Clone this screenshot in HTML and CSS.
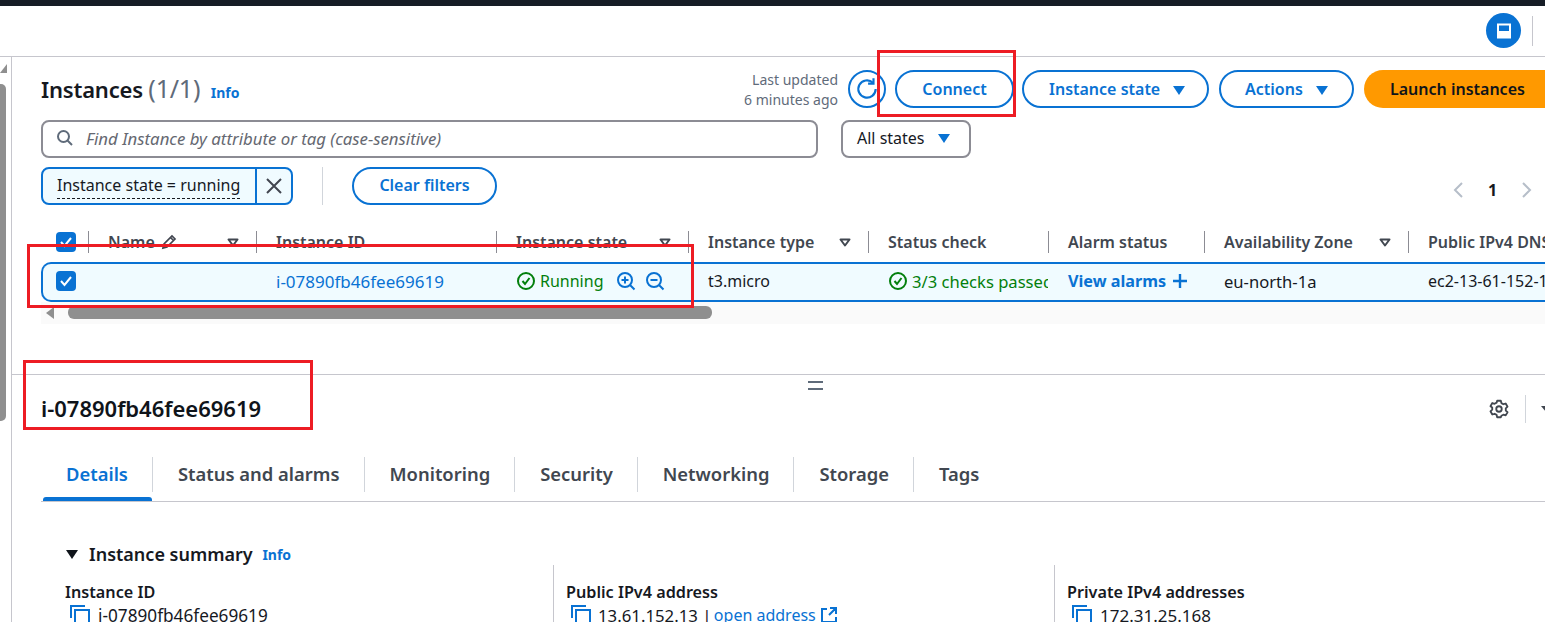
FILE: index.html
```html
<!DOCTYPE html>
<html lang="en">
<head>
<meta charset="utf-8">
<title>Instances</title>
<link rel="stylesheet" href="styles.css">
</head>
<body>
<div class="page">
  <div class="blackbar"></div>
  <header class="topbar">
    <span class="round-icon">
      <svg width="20" height="20" viewBox="0 0 20 20"><rect x="4" y="3.500" width="12" height="13" fill="none" stroke="#fff" stroke-width="2"/><rect x="4" y="10" width="12" height="6" fill="#fff"/></svg>
    </span>
    <span class="top-sep"></span>
  </header>
  <div class="workspace">
    <aside class="gutter">
      <span class="scroll-up"></span>
      <span class="scroll-thumb"></span>
    </aside>
    <main class="main">
      <section class="list-panel">
        <div class="head-row">
          <h1 class="title">Instances <span class="count">(1/1)</span> <a class="info">Info</a></h1>
          <div class="actions">
            <div class="updated">Last updated<br>6 minutes ago</div>
            <button class="refresh">
              <svg width="26" height="26" viewBox="0 0 24 24" fill="none" stroke="#0972d3" stroke-width="2"><path d="M17.500 6.200A8 8 0 1 0 20 12"/><path d="M18 2v5h-5"/></svg>
            </button>
            <button class="btn btn-connect">Connect</button>
            <button class="btn btn-state">Instance state <i class="caret"></i></button>
            <button class="btn btn-actions">Actions <i class="caret"></i></button>
            <button class="btn-primary">Launch instances</button>
          </div>
        </div>
        <div class="search-row">
          <div class="search">
            <svg width="18" height="18" viewBox="0 0 18 18" fill="none" stroke="#5f6b7a" stroke-width="2"><circle cx="7.500" cy="7.500" r="5.500"/><path d="M11.500 11.500 16 16"/></svg>
            <span>Find Instance by attribute or tag (case-sensitive)</span>
          </div>
          <div class="states">All states <i class="caret"></i></div>
        </div>
        <div class="filter-row">
          <div class="token">
            <span class="token-text"><span class="dashed">Instance state = running</span></span>
            <span class="token-x">
              <svg width="16" height="16" viewBox="0 0 16 16" fill="none" stroke="#424650" stroke-width="2"><path d="M1 1l14 14M15 1 1 15"/></svg>
            </span>
          </div>
          <span class="filter-sep"></span>
          <button class="btn btn-clear">Clear filters</button>
          <div class="pager">
            <svg width="12" height="18" viewBox="0 0 12 18" fill="none" stroke="#b6bec9" stroke-width="2"><path d="M10 2 3 9l7 7"/></svg>
            <b>1</b>
            <svg width="12" height="18" viewBox="0 0 12 18" fill="none" stroke="#b6bec9" stroke-width="2"><path d="m2 2 7 7-7 7"/></svg>
          </div>
        </div>
        <div class="table">
          <div class="tr thead">
            <div class="th first"><span class="check"><svg width="20" height="20" viewBox="0 0 20 20" fill="none" stroke="#fff" stroke-width="2"><path d="m5 10 3.500 4L15 6"/></svg></span></div>
            <div class="th"><span>Name</span><svg class="pencil" width="18" height="18" viewBox="0 0 18 18" fill="none" stroke="#424650" stroke-width="1.700"><path d="M3 15l1-4 8-8 3 3-8 8zM10.500 4.500l3 3"/></svg><svg class="sort" width="12" height="9" viewBox="0 0 12 9" fill="none" stroke="#414750" stroke-width="2" stroke-linejoin="round"><path d="M1.500 1.500h9L6 7.500z"/></svg></div>
            <div class="th"><span>Instance ID</span></div>
            <div class="th"><span>Instance state</span><svg class="sort" width="12" height="9" viewBox="0 0 12 9" fill="none" stroke="#414750" stroke-width="2" stroke-linejoin="round"><path d="M1.500 1.500h9L6 7.500z"/></svg></div>
            <div class="th"><span>Instance type</span><svg class="sort" width="12" height="9" viewBox="0 0 12 9" fill="none" stroke="#414750" stroke-width="2" stroke-linejoin="round"><path d="M1.500 1.500h9L6 7.500z"/></svg></div>
            <div class="th"><span>Status check</span></div>
            <div class="th"><span>Alarm status</span></div>
            <div class="th"><span>Availability Zone</span><svg class="sort" width="12" height="9" viewBox="0 0 12 9" fill="none" stroke="#414750" stroke-width="2" stroke-linejoin="round"><path d="M1.500 1.500h9L6 7.500z"/></svg></div>
            <div class="th"><span>Public IPv4 DNS</span></div>
          </div>
          <div class="tr tbody">
            <div class="td first"><span class="check"><svg width="20" height="20" viewBox="0 0 20 20" fill="none" stroke="#fff" stroke-width="2"><path d="m5 10 3.500 4L15 6"/></svg></span></div>
            <div class="td"></div>
            <div class="td"><a class="link idtext">i-07890fb46fee69619</a></div>
            <div class="td green">
              <svg class="ok" width="20" height="20" viewBox="0 0 20 20" fill="none" stroke="#037f0c" stroke-width="2"><circle cx="10" cy="10" r="8"/><path d="m6.500 10 2.500 3 4.500-6"/></svg>
              <span>Running</span>
              <svg class="zoomi" width="20" height="20" viewBox="0 0 20 20" fill="none" stroke="#0972d3" stroke-width="2"><circle cx="9" cy="9" r="7"/><path d="m14 14 4.500 4.500M5.500 9h7M9 5.500v7"/></svg>
              <svg class="zoomo" width="20" height="20" viewBox="0 0 20 20" fill="none" stroke="#0972d3" stroke-width="2"><circle cx="9" cy="9" r="7"/><path d="m14 14 4.500 4.500M5.500 9h7"/></svg>
            </div>
            <div class="td">t3.micro</div>
            <div class="td green checks">
              <svg class="ok" width="20" height="20" viewBox="0 0 20 20" fill="none" stroke="#037f0c" stroke-width="2"><circle cx="10" cy="10" r="8"/><path d="m6.500 10 2.500 3 4.500-6"/></svg>
              <span>3/3 checks passed</span>
            </div>
            <div class="td"><a class="alarm">View alarms</a><svg class="plus" width="16" height="16" viewBox="0 0 16 16" stroke="#0972d3" stroke-width="2.400"><path d="M8 1v14M1 8h14"/></svg></div>
            <div class="td az">eu-north-1a</div>
            <div class="td">ec2-13-61-152-13.eu-north-1.compute.amazonaws.com</div>
          </div>
        </div>
        <div class="hscroll">
          <span class="hscroll-arrow"></span>
          <span class="hscroll-thumb"></span>
        </div>
      </section>
      <section class="detail-panel">
        <div class="handle"></div>
        <div class="detail-head">
          <h2 class="detail-title">i-07890fb46fee69619</h2>
          <div class="detail-tools">
            <svg width="22" height="22" viewBox="0 0 24 24" fill="none" stroke="#414750" stroke-width="2" stroke-linejoin="round"><circle cx="12" cy="12" r="3"/><path d="M10 3h4l.6 2.600 2.200 1.200 2.500-.8 2 3.500-1.900 1.800v2.400l1.900 1.800-2 3.500-2.500-.8-2.200 1.200L14 21h-4l-.6-2.600-2.200-1.200-2.500.8-2-3.500 1.900-1.800v-2.400L2.700 9l2-3.500 2.500.8 2.200-1.200z"/></svg>
            <span class="tool-sep"></span>
            <i class="tool-caret"></i>
          </div>
        </div>
        <nav class="tabs">
          <a class="tab active">Details</a>
          <a class="tab">Status and alarms</a>
          <a class="tab">Monitoring</a>
          <a class="tab">Security</a>
          <a class="tab">Networking</a>
          <a class="tab">Storage</a>
          <a class="tab">Tags</a>
        </nav>
        <h3 class="summary"><i class="down"></i>Instance summary <a class="info small">Info</a></h3>
        <div class="kv">
          <div class="kv-col">
            <div class="k">Instance ID</div>
            <div class="v"><svg class="copy" width="20" height="20" viewBox="0 0 20 20" fill="none" stroke="#0972d3" stroke-width="2"><path d="M1 13V1h14M5 19V5h14v14"/></svg><span class="long">i-07890fb46fee69619</span></div>
          </div>
          <div class="kv-col">
            <div class="k">Public IPv4 address</div>
            <div class="v v-public"><svg class="copy" width="20" height="20" viewBox="0 0 20 20" fill="none" stroke="#0972d3" stroke-width="2"><path d="M1 13V1h14M5 19V5h14v14"/></svg>13.61.152.13 | <a class="link open">open address</a><svg class="ext" width="16" height="16" viewBox="0 0 16 16" fill="none" stroke="#0972d3" stroke-width="2"><path d="M6 2H1v13h14v-5M9 1h6v6M15 1 8 8"/></svg></div>
          </div>
          <div class="kv-col">
            <div class="k">Private IPv4 addresses</div>
            <div class="v"><svg class="copy" width="20" height="20" viewBox="0 0 20 20" fill="none" stroke="#0972d3" stroke-width="2"><path d="M1 13V1h14M5 19V5h14v14"/></svg>172.31.25.168</div>
          </div>
        </div>
      </section>
    </main>
  </div>
  <span class="mark mark-connect"></span>
  <span class="mark mark-row"></span>
  <span class="mark mark-id"></span>
</div>
</body>
</html>
```
FILE: styles.css
```css
* { box-sizing: border-box; }
html, body { margin: 0; padding: 0; height: 100%; overflow: hidden; background: #fff; }
body { font-family: "Noto Sans", "Open Sans", sans-serif; font-size: 16px; color: #16191f; }
h1, h2, h3 { margin: 0; }
a { color: #0972d3; }
button { font-family: inherit; cursor: pointer; }

.page { position: relative; width: 1545px; height: 622px; overflow: hidden; }
.blackbar { height: 6px; background: #161d26; }
.topbar { height: 51px; border-bottom: 1px solid #c6c6cd; display: flex; align-items: flex-start; justify-content: flex-end; padding-top: 7px; padding-right: 12px; gap: 11px; }
.round-icon { width: 35px; height: 35px; border-radius: 50%; background: #0972d3; display: flex; align-items: center; justify-content: center; }
.top-sep { width: 1px; height: 30px; margin-top: 3px; background: #c6c6cd; }

.workspace { display: flex; height: 565px; }
.gutter { position: relative; width: 12px; flex: none; border-right: 1px solid #c6c6cd; }
.scroll-up { position: absolute; left: 0; top: 7px; width: 0; height: 0; border-left: 7px solid transparent; border-bottom: 9px solid #8f8f8f; }
.scroll-thumb { position: absolute; left: 0; top: 27px; width: 6px; height: 337px; background: #8f8f8f; border-radius: 0 5px 5px 0; }

.main { flex: 1; min-width: 0; overflow: hidden; }
.list-panel { height: 318px; padding: 13px 0 0 29px; border-bottom: 1px solid #c6c6cd; width: 1533px; }

.head-row { display: flex; justify-content: space-between; height: 50px; }
.title { font-size: 22px; font-weight: 600; line-height: 36px; letter-spacing: -.2px; white-space: nowrap; }
.count { font-size: 25px; font-weight: 400; color: #5f6b7a; }
.info { font-size: 14px; font-weight: 700; margin-left: 5px; letter-spacing: 0; }
.actions { display: flex; align-items: flex-start; white-space: nowrap; margin-right: -9px; }
.updated { font-size: 14px; line-height: 20px; color: #5f6b7a; text-align: right; margin-right: 10px; }
.refresh { width: 38px; height: 38px; padding: 0; margin: 0 9px 0 0; border: 2px solid #0972d3; border-radius: 50%; background: #fff; display: flex; align-items: center; justify-content: center; }
.btn { height: 38px; border: 2px solid #0972d3; border-radius: 19px; background: #fff; color: #0972d3; font-size: 16px; font-weight: 600; padding: 0; white-space: nowrap; }
.btn-connect { width: 119px; margin-right: 8px; }
.btn-state { width: 187px; margin-right: 10px; text-align: left; padding-left: 25px; }
.btn-actions { width: 135px; margin-right: 10px; text-align: left; padding-left: 24px; }
.btn-clear { width: 145px; padding-bottom: 2px; }
.caret { display: inline-block; width: 0; height: 0; border-left: 6.500px solid transparent; border-right: 6.500px solid transparent; border-top: 9px solid #0972d3; margin-left: 9px; }
.btn-primary { width: 190px; height: 38px; border: 0; border-radius: 19px 0 0 19px; background: #ff9900; color: #0f141a; font-size: 16px; font-weight: 600; text-align: left; padding: 0 0 0 26px; white-space: nowrap; }

.search-row { display: flex; gap: 23px; height: 38px; }
.search { width: 777px; height: 38px; border: 2px solid #8c8c94; border-radius: 8px; display: flex; align-items: center; gap: 12px; padding: 0 0 2px 13px; font-size: 16.800px; font-style: italic; color: #656871; }
.states { width: 130px; height: 38px; border: 2px solid #8c8c94; border-radius: 8px; display: flex; align-items: center; padding: 0 0 2px 14px; white-space: pre; }

.filter-row { display: flex; align-items: center; height: 38px; margin-top: 9px; position: relative; }
.token { display: flex; width: 252px; height: 38px; border: 2px solid #0972d3; border-radius: 8px; background: #f0fbff; overflow: hidden; }
.token-text { flex: 1; padding-left: 14px; line-height: 32px; white-space: nowrap; }
.dashed { border-bottom: 1px dashed #16191f; padding-bottom: 2px; }
.token-x { width: 36px; border-left: 2px solid #0972d3; display: flex; align-items: center; justify-content: center; }
.filter-sep { width: 1px; height: 38px; background: #d1d5db; margin: 0 29px; }
.pager { position: absolute; left: 1411px; top: 12px; display: flex; align-items: center; gap: 24px; font-size: 16px; }

.table { margin-top: 16px; }
.tr { display: grid; grid-template-columns: 47px 168px 240px 192px 180px 180px 156px 204px 300px; }
.thead { height: 42px; align-items: center; }
.th { position: relative; display: flex; align-items: center; height: 22px; padding-left: 20px; font-weight: 600; color: #414750; white-space: nowrap; font-size: 16px; }
.th::before { content: ""; position: absolute; left: 0; top: 0; width: 1px; height: 22px; background: #8c8c94; }
.th.first { padding-left: 14.500px; }
.th.first::before { display: none; }
.pencil { margin-left: 5px; }
.sort { position: absolute; right: 17px; top: 7px; }
.check { width: 20px; height: 20px; background: #0972d3; border-radius: 4px; display: block; }
.tbody { width: 1600px; height: 40px; align-items: center; background: #f0fbff; border: 2px solid #0972d3; border-right: 0; border-radius: 10px 0 0 10px; margin-top: -1px; grid-template-columns: 45px 168px 240px 192px 180px 180px 156px 204px 300px; }
.td { display: flex; align-items: center; padding: 0 0 2px 20px; white-space: nowrap; overflow: hidden; height: 36px; }
.td.first { padding-left: 12.500px; }
.link { color: #0972d3; }
.idtext { font-size: 17px; }
.green { color: #037f0c; }
.checks { font-size: 16.600px; }
.az { font-size: 16.600px; }
.ok { margin-right: 4px; flex: none; }
.zoomi { margin-left: 13px; }
.zoomo { margin-left: 9px; }
.alarm { font-weight: 700; font-size: 16.200px; }
.plus { margin-left: 6px; }
.hscroll { display: flex; align-items: center; height: 22px; background: #fafafa; padding-left: 5px; position: relative; }
.hscroll-arrow { width: 0; height: 0; border-top: 6px solid transparent; border-bottom: 6px solid transparent; border-right: 8px solid #8f8f8f; }
.hscroll-thumb { width: 644px; height: 13px; border-radius: 6px; background: #8f8f8f; margin-left: 14px; margin-top: -2px; }

.detail-panel { position: relative; padding: 16px 0 0 29px; width: 1533px; }
.handle { position: absolute; left: 796px; top: 6px; width: 15px; height: 9px; border-top: 2px solid #5f6b7a; border-bottom: 2px solid #5f6b7a; }
.detail-head { display: flex; justify-content: space-between; align-items: center; height: 36px; }
.detail-title { font-size: 22px; font-weight: 600; color: #0f141a; padding-bottom: 2px; }
.detail-tools { display: flex; align-items: center; gap: 15px; margin-right: -10px; width: 67px; }
.tool-sep { width: 1px; height: 28px; background: #d1d5db; }
.tool-caret { width: 0; height: 0; border-left: 5px solid transparent; border-right: 5px solid transparent; border-top: 6px solid #414750; }

.tabs { display: flex; width: 1504px; height: 45px; margin-top: 30px; border-bottom: 1px solid #c6c6cd; position: relative; }
.tab { position: relative; height: 35px; line-height: 33px; padding: 0 24px 0 25px; font-size: 18.400px; font-weight: 600; color: #414750; white-space: nowrap; border-right: 1px solid #d1d5db; }
.tab:last-child { border-right: 0; }
.tab.active { color: #0972d3; }
.tab.active::after { content: ""; position: absolute; left: 2px; right: 0; bottom: -9px; height: 4px; background: #0972d3; border-radius: 3px 3px 0 0; }

.summary { display: flex; align-items: center; height: 26px; margin-top: 39px; padding-left: 25px; font-size: 18px; font-weight: 600; color: #16191f; white-space: pre; }
.down { width: 0; height: 0; border-left: 6px solid transparent; border-right: 6px solid transparent; border-top: 9px solid #0f141a; margin-right: 11px; }
.info.small { margin-left: 5px; }

.kv { display: grid; grid-template-columns: 501px 501px 300px; margin-left: 11px; margin-top: -2px; }
.kv-col { padding-left: 12px; border-left: 1px solid #c6c6cd; padding-top: 17px; }
.kv-col:first-child { border-left: 0; padding-left: 13px; }
.k { font-weight: 600; font-size: 16.200px; line-height: 20px; white-space: nowrap; }
.v { display: flex; align-items: center; height: 26px; white-space: pre; font-size: 17px; }
.v-public { font-size: 16.800px; }
.v-public .copy { margin-right: 7px; }
.long { font-size: 17.200px; }
.open { font-size: 16px; margin-left: -2px; }
.copy { margin: 0 8px 0 5px; flex: none; }
.ext { margin-left: 5px; }

.mark { position: absolute; border: 3px solid #ed1c24; pointer-events: none; }
.mark-connect { left: 877px; top: 50px; width: 139px; height: 67px; }
.mark-row { left: 27px; top: 244px; width: 667px; height: 64px; }
.mark-id { left: 23px; top: 360px; width: 290px; height: 70px; }
```
